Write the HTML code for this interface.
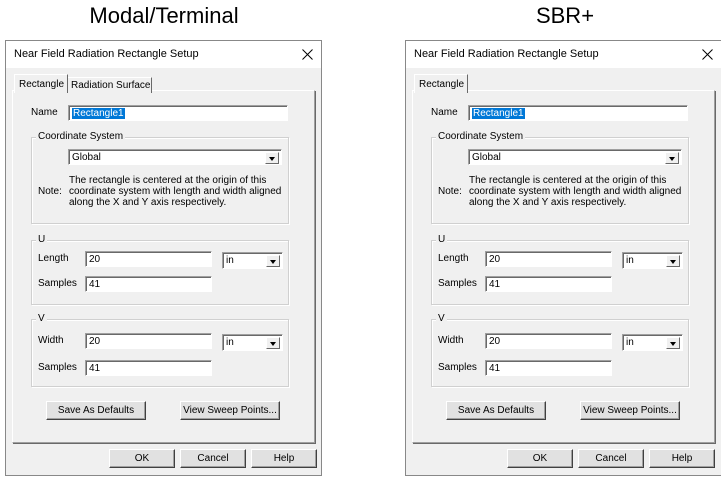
<!DOCTYPE html>
<html><head><style>
body{margin:0;width:721px;height:479px;background:#fff;position:relative;overflow:hidden;font-family:"Liberation Sans",sans-serif;font-size:10px;color:#000}
.a{position:absolute;white-space:nowrap}
.h{position:absolute;top:3px;font-size:22px;transform:translateX(-50%);white-space:nowrap}
.dlg{position:absolute;top:40px;width:315px;height:434px;border:1px solid #888;background:#f0f0f0}
.tb{position:absolute;left:0;top:0;width:315px;height:27px;background:#fff}
.panel{position:absolute;left:6px;top:49px;width:301px;height:351px;border:1px solid #fff;border-right-color:#a0a0a0;border-bottom-color:#a0a0a0;box-shadow:1px 1px 0 #696969}
.tab{position:absolute;background:#f0f0f0;border:1px solid #fff;border-right:1px solid #696969;border-bottom:none;padding:1px 0 0 4px;height:14px;line-height:14px;white-space:nowrap;box-sizing:content-box}
.grp{position:absolute;border:1px solid #d0d0d0;box-shadow:inset 1px 1px 0 #fff,1px 1px 0 #fff}
.leg{position:absolute;top:-7px;background:#f0f0f0;padding:0 2px;left:4px;white-space:nowrap}
.inp{position:absolute;background:#fff;border-top:1px solid #a0a0a0;border-left:1px solid #a0a0a0;border-right:1px solid #fff;border-bottom:1px solid #fff;box-shadow:inset 1px 1px 0 #696969;height:16px;line-height:15px;padding-left:3px;box-sizing:border-box;white-space:nowrap}
.arr{position:absolute;right:2px;top:2px;width:14px;height:12px;background:#f0f0f0;border:1px solid;border-color:#fff #696969 #696969 #fff;box-sizing:border-box}
.arr:after{content:"";position:absolute;left:3px;top:4px;border-left:3.5px solid transparent;border-right:3.5px solid transparent;border-top:4px solid #000}
.btn{position:absolute;height:19px;line-height:18px;text-align:center;background:#e1e1e1;border:1px solid;border-color:#fff #404040 #404040 #fff;box-shadow:inset -1px -1px 0 #a0a0a0;box-sizing:border-box;white-space:nowrap}
.sel{background:#0078d7;color:#fff;padding:0 1px}
.x{position:absolute;left:296px;top:8px}
</style></head><body>
<div class="h" style="left:164px">Modal/Terminal</div>
<div class="h" style="left:565px">SBR+</div>

<!-- LEFT -->
<div class="dlg" style="left:5px">
<div class="tb"><span class="a" style="left:8px;top:7px;font-size:11px">Near Field Radiation Rectangle Setup</span><svg class="x" width="11" height="11"><path d="M0.5 0.5L10.5 10.5M10.5 0.5L0.5 10.5" stroke="#000" stroke-width="1"/></svg></div>
<div class="panel"></div>
<div class="tab" style="left:61px;top:36px;width:80px;border-left:none">Radiation Surface</div>
<div class="tab" style="left:8px;top:33px;height:17px;width:48px;line-height:17px">Rectangle</div>
<span class="a" style="left:25px;top:66px">Name</span>
<div class="inp" style="left:62px;top:64px;width:220px"><span class="sel">Rectangle1</span></div>
<div class="grp" style="left:25px;top:96px;width:256px;height:85px"><span class="leg">Coordinate System</span></div>
<div class="inp" style="left:62px;top:108px;width:214px">Global<div class="arr"></div></div>
<span class="a" style="left:63px;top:134px;line-height:11px">The rectangle is centered at the origin of this<br>coordinate system with length and width aligned<br>along the X and Y axis respectively.</span>
<span class="a" style="left:32px;top:145px">Note:</span>
<div class="grp" style="left:25px;top:199px;width:256px;height:63px"><span class="leg">U</span></div>
<span class="a" style="left:32px;top:212px">Length</span>
<div class="inp" style="left:79px;top:210px;width:127px">20</div>
<div class="inp" style="left:216px;top:211px;width:61px;height:17px">in<div class="arr"></div></div>
<span class="a" style="left:32px;top:237px">Samples</span>
<div class="inp" style="left:79px;top:235px;width:127px">41</div>
<div class="grp" style="left:25px;top:278px;width:256px;height:66px"><span class="leg">V</span></div>
<span class="a" style="left:32px;top:294px">Width</span>
<div class="inp" style="left:79px;top:292px;width:127px">20</div>
<div class="inp" style="left:216px;top:293px;width:61px;height:17px">in<div class="arr"></div></div>
<span class="a" style="left:32px;top:321px">Samples</span>
<div class="inp" style="left:79px;top:319px;width:127px">41</div>
<div class="btn" style="left:40px;top:360px;width:100px">Save As Defaults</div>
<div class="btn" style="left:174px;top:360px;width:100px">View Sweep Points...</div>
<div class="btn" style="left:103px;top:408px;width:66px">OK</div>
<div class="btn" style="left:174px;top:408px;width:66px">Cancel</div>
<div class="btn" style="left:245px;top:408px;width:66px">Help</div>
</div>

<!-- RIGHT -->
<div class="dlg" style="left:405px">
<div class="tb"><span class="a" style="left:8px;top:7px;font-size:11px">Near Field Radiation Rectangle Setup</span><svg class="x" width="11" height="11"><path d="M0.5 0.5L10.5 10.5M10.5 0.5L0.5 10.5" stroke="#000" stroke-width="1"/></svg></div>
<div class="panel"></div>
<div class="tab" style="left:8px;top:33px;height:17px;width:48px;line-height:17px">Rectangle</div>
<span class="a" style="left:25px;top:66px">Name</span>
<div class="inp" style="left:62px;top:64px;width:220px"><span class="sel">Rectangle1</span></div>
<div class="grp" style="left:25px;top:96px;width:256px;height:85px"><span class="leg">Coordinate System</span></div>
<div class="inp" style="left:62px;top:108px;width:214px">Global<div class="arr"></div></div>
<span class="a" style="left:63px;top:134px;line-height:11px">The rectangle is centered at the origin of this<br>coordinate system with length and width aligned<br>along the X and Y axis respectively.</span>
<span class="a" style="left:32px;top:145px">Note:</span>
<div class="grp" style="left:25px;top:199px;width:256px;height:63px"><span class="leg">U</span></div>
<span class="a" style="left:32px;top:212px">Length</span>
<div class="inp" style="left:79px;top:210px;width:127px">20</div>
<div class="inp" style="left:216px;top:211px;width:61px;height:17px">in<div class="arr"></div></div>
<span class="a" style="left:32px;top:237px">Samples</span>
<div class="inp" style="left:79px;top:235px;width:127px">41</div>
<div class="grp" style="left:25px;top:278px;width:256px;height:66px"><span class="leg">V</span></div>
<span class="a" style="left:32px;top:294px">Width</span>
<div class="inp" style="left:79px;top:292px;width:127px">20</div>
<div class="inp" style="left:216px;top:293px;width:61px;height:17px">in<div class="arr"></div></div>
<span class="a" style="left:32px;top:321px">Samples</span>
<div class="inp" style="left:79px;top:319px;width:127px">41</div>
<div class="btn" style="left:40px;top:360px;width:100px">Save As Defaults</div>
<div class="btn" style="left:174px;top:360px;width:100px">View Sweep Points...</div>
<div class="btn" style="left:101px;top:408px;width:66px">OK</div>
<div class="btn" style="left:172px;top:408px;width:66px">Cancel</div>
<div class="btn" style="left:243px;top:408px;width:66px">Help</div>
</div>
</body></html>
